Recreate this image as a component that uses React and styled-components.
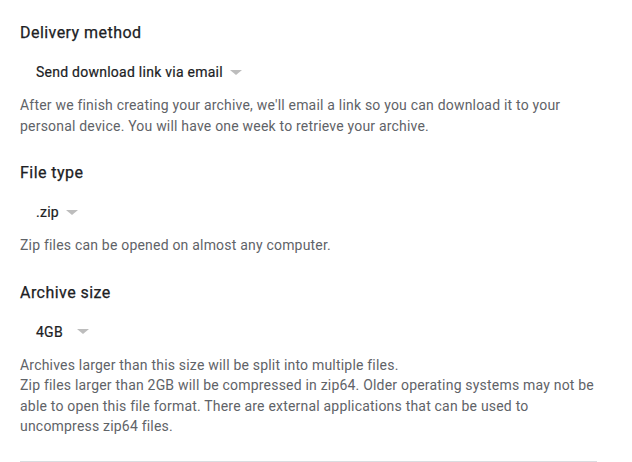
import React from 'react';
import styled, { createGlobalStyle } from 'styled-components';

const GlobalStyle = createGlobalStyle`
  body {
    margin: 0;
    background: #fff;
    font-family: Roboto, "Liberation Sans", sans-serif;
  }
`;

const Page = styled.div`
  padding: 21px 0 0 20px;
  width: 577px;
`;

const Section = styled.section`
  & + & {
    margin-top: 25px;
  }
`;

const Heading = styled.h3`
  margin: 0;
  font-size: 16px;
  line-height: 24px;
  font-weight: 400;
  color: #202124;
  letter-spacing: 0.45px;
  -webkit-text-stroke: 0.25px #202124;
`;

const Select = styled.div`
  display: flex;
  align-items: center;
  height: 36px;
  margin-top: 9px;
  padding-left: 16px;
  cursor: pointer;
`;

const SelectValue = styled.span`
  min-width: ${(p) => p.$minWidth || 0}px;
  font-size: 14px;
  font-weight: 400;
  letter-spacing: 0.25px;
  color: #202124;
  -webkit-text-stroke: 0.2px #202124;
`;

const Arrow = styled.span`
  width: 0;
  height: 0;
  margin-left: ${(p) => p.$gap || 8}px;
  border-left: 6px solid transparent;
  border-right: 6px solid transparent;
  border-top: 5px solid #bdbdbd;
`;

const Description = styled.p`
  margin: 5px 0 0;
  font-size: 14px;
  line-height: 20.5px;
  letter-spacing: 0.2px;
  color: #5f6368;
`;

const Divider = styled.hr`
  margin: 24px 0 0;
  border: none;
  border-top: 1px solid #dadce0;
`;

function Dropdown({ value, minWidth, gap }) {
    return (
        <Select>
            <SelectValue $minWidth={minWidth}>{value}</SelectValue>
            <Arrow $gap={gap} />
        </Select>
    );
}

export default function App() {
    return (
        <>
            <GlobalStyle />
            <Page>
                <Section>
                    <Heading>Delivery method</Heading>
                    <Dropdown value="Send download link via email" gap={7} />
                    <Description>
                        After we finish creating your archive, we'll email a link so you can download it to your
                        personal device. You will have one week to retrieve your archive.
                    </Description>
                </Section>
                <Section>
                    <Heading>File type</Heading>
                    <Dropdown value=".zip" gap={7} />
                    <Description>Zip files can be opened on almost any computer.</Description>
                </Section>
                <Section>
                    <Heading>Archive size</Heading>
                    <Dropdown value="4GB" minWidth={35} gap={6} />
                    <Description>
                        Archives larger than this size will be split into multiple files.
                        <br />
                        Zip files larger than 2GB will be compressed in zip64. Older operating systems may not be
                        able to open this file format. There are external applications that can be used to
                        uncompress zip64 files.
                    </Description>
                </Section>
                <Divider />
            </Page>
        </>
    );
}
